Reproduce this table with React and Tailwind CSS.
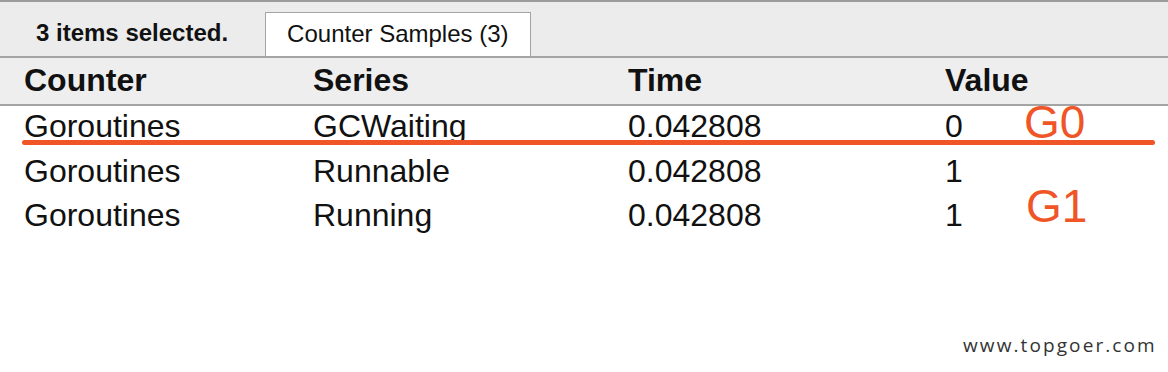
const ROWS = [
  { counter: "Goroutines", series: "GCWaiting", time: "0.042808", value: "0" },
  { counter: "Goroutines", series: "Runnable", time: "0.042808", value: "1" },
  { counter: "Goroutines", series: "Running", time: "0.042808", value: "1" },
];

const COLS = "grid grid-cols-[289px_315px_317px_1fr] px-[24px]";

export default function App() {
  return (
    <div className="relative h-[372px] w-[1168px] overflow-hidden bg-white font-['Liberation_Sans',Arial,sans-serif] text-[#111]">
      <div className="h-[2px] bg-[#9c9c9c]" />
      <div className="flex h-[54px] items-end bg-[#ececec]">
        <div className="flex h-[44px] items-center pb-[2px] pl-[36px] text-[24px] font-bold leading-none">
          3 items selected.
        </div>
        <div className="ml-[37px] flex h-[44px] items-center border border-b-0 border-[#a4a4a4] bg-white px-[21px] pb-[2px] text-[24px] leading-none">
          Counter Samples (3)
        </div>
      </div>
      <div className="h-[2px] bg-[#a4a4a4]" />
      <div className={`${COLS} h-[46px] items-center bg-[#eeeeee] pb-[2px] text-[32px] font-bold leading-none`}>
        <div>Counter</div>
        <div>Series</div>
        <div>Time</div>
        <div>Value</div>
      </div>
      <div className="h-[2px] bg-[#a4a4a4]" />
      <div>
        {ROWS.map((r, i) => (
          <div key={i} className={`${COLS} h-[44.5px] items-center pb-[4px] text-[32px] leading-none`}>
            <div>{r.counter}</div>
            <div>{r.series}</div>
            <div>{r.time}</div>
            <div>{r.value}</div>
          </div>
        ))}
      </div>

      {/* annotations */}
      <div className="absolute left-[22px] top-[140px] h-[5px] w-[1133px] rounded-full bg-[#ef5527]" />
      <div className="absolute left-[1024px] top-[99px] text-[46px] leading-none text-[#ef5527]">G0</div>
      <div className="absolute left-[1026px] top-[183px] text-[46px] leading-none text-[#ef5527]">G1</div>
      <div className="absolute left-[963px] top-[336px] font-['Open_Sans',sans-serif] text-[19px] leading-none tracking-[2.1px] text-[#333]">
        www.topgoer.com
      </div>
    </div>
  );
}
